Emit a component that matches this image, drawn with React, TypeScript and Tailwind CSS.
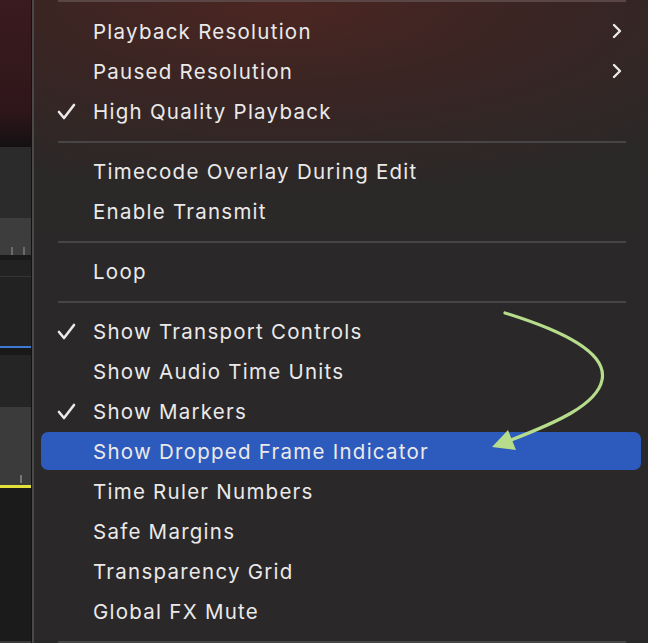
import React from 'react';

type Item = { label: string; checked?: boolean; submenu?: boolean; active?: boolean };

const groups: Item[][] = [
  [
    { label: 'Playback Resolution', submenu: true },
    { label: 'Paused Resolution', submenu: true },
    { label: 'High Quality Playback', checked: true },
  ],
  [{ label: 'Timecode Overlay During Edit' }, { label: 'Enable Transmit' }],
  [{ label: 'Loop' }],
  [
    { label: 'Show Transport Controls', checked: true },
    { label: 'Show Audio Time Units' },
    { label: 'Show Markers', checked: true },
    { label: 'Show Dropped Frame Indicator', active: true },
    { label: 'Time Ruler Numbers' },
    { label: 'Safe Margins' },
    { label: 'Transparency Grid' },
    { label: 'Global FX Mute' },
  ],
];

function Check() {
  return (
    <svg width="19" height="17" viewBox="0 0 19 17" className="shrink-0">
      <polyline points="2,9 7,15 17,2" fill="none" stroke="#ebe9e9" strokeWidth="2.6" strokeLinecap="round" strokeLinejoin="round" />
    </svg>
  );
}

function Chevron() {
  return (
    <svg width="12" height="16" viewBox="0 0 12 16">
      <polyline points="3,2 9,8 3,14" fill="none" stroke="#ebe9e9" strokeWidth="2.4" strokeLinecap="round" strokeLinejoin="round" />
    </svg>
  );
}

function Separator({ first }: { first?: boolean }) {
  if (first) {
    return (
      <div className="h-[12px] pl-[24px] pr-[22px]">
        <div className="h-[2px] bg-[#5a4644]" />
      </div>
    );
  }
  return (
    <div className="h-[20px] flex items-center pl-[24px] pr-[22px]">
      <div className="h-[2px] w-full bg-[#474545]" />
    </div>
  );
}

function Row({ item }: { item: Item }) {
  return (
    <div className="h-[40px] px-[7px] flex items-center">
      <div
        className={`h-[38px] w-full rounded-[7px] flex items-center pl-[16px] pr-[18px] -mt-[2px] ${
          item.active ? 'bg-[#2d5abd]' : ''
        }`}
      >
        <div className="w-[36px] flex items-center">{item.checked && <Check />}</div>
        <span className="flex-1 text-[20.5px] leading-none text-[#ebe9e9] tracking-[1.25px] mt-[2px]">{item.label}</span>
        {item.submenu && <Chevron />}
      </div>
    </div>
  );
}

function LeftStrip() {
  return (
    <div className="w-[31px] flex flex-col shrink-0">
      <div className="h-[147px] bg-gradient-to-b from-[#3a1b1f] via-[#2f161a] via-75% to-[#141012]" />
      <div className="h-[71px] bg-[#2b2b2b]" />
      <div className="h-[37px] bg-[#3d3d3d] relative">
        <div className="absolute left-[11px] bottom-0 w-[2px] h-[8px] bg-[#6a6a6a]" />
        <div className="absolute left-[23px] bottom-0 w-[2px] h-[8px] bg-[#6a6a6a]" />
      </div>
      <div className="h-[5px] bg-[#1a1a1a]" />
      <div className="h-[16px] bg-[#222222]" />
      <div className="h-[1px] bg-[#353535]" />
      <div className="h-[69px] bg-[#222222]" />
      <div className="h-[2px] bg-[#3d7ad6]" />
      <div className="h-[7px] bg-[#191919]" />
      <div className="h-[52px] bg-[#252525]" />
      <div className="h-[78px] bg-[#3b3b3b] relative">
        <div className="absolute left-[20px] bottom-[2px] w-[2px] h-[8px] bg-[#777777]" />
      </div>
      <div className="h-[3px] bg-[#e3e23c]" />
      <div className="flex-1 bg-[#1b1b1b]" />
      <div className="h-[2px] bg-[#3a3a3a]" />
    </div>
  );
}

export default function App() {
  return (
    <div
      className="relative flex h-[643px] w-[648px] overflow-hidden bg-[#1c1c1c]"
      style={{ fontFamily: 'Inter, "Noto Sans", sans-serif' }}
    >
      <LeftStrip />
      <div className="w-[1px] bg-[#121212] shrink-0" />
      <div className="w-[2px] bg-[#4a4848] shrink-0" />
      <div className="flex-1 flex flex-col bg-[radial-gradient(ellipse_90%_30%_at_40%_0%,#4c2622_0%,#3a2523_45%,#2b2828_100%)]">
        <div className="flex flex-col bg-[linear-gradient(to_bottom,transparent_0%,transparent_25%,#2a2828_45%)]">
          <Separator first />
          {groups.map((g, gi) => (
            <React.Fragment key={gi}>
              {gi > 0 && <Separator />}
              {g.map((item) => (
                <Row key={item.label} item={item} />
              ))}
            </React.Fragment>
          ))}
          <Separator />
        </div>
      </div>
      <svg className="absolute inset-0 pointer-events-none" width="648" height="643" viewBox="0 0 648 643">
        <path
          d="M505 313 C 560 330, 608 352, 602 380 C 597 405, 555 423, 511 440"
          fill="none"
          stroke="#b6dc8c"
          strokeWidth="3.2"
          strokeLinecap="round"
        />
        <polygon points="492,447 508,430 516,450" fill="#b6dc8c" />
      </svg>
    </div>
  );
}
